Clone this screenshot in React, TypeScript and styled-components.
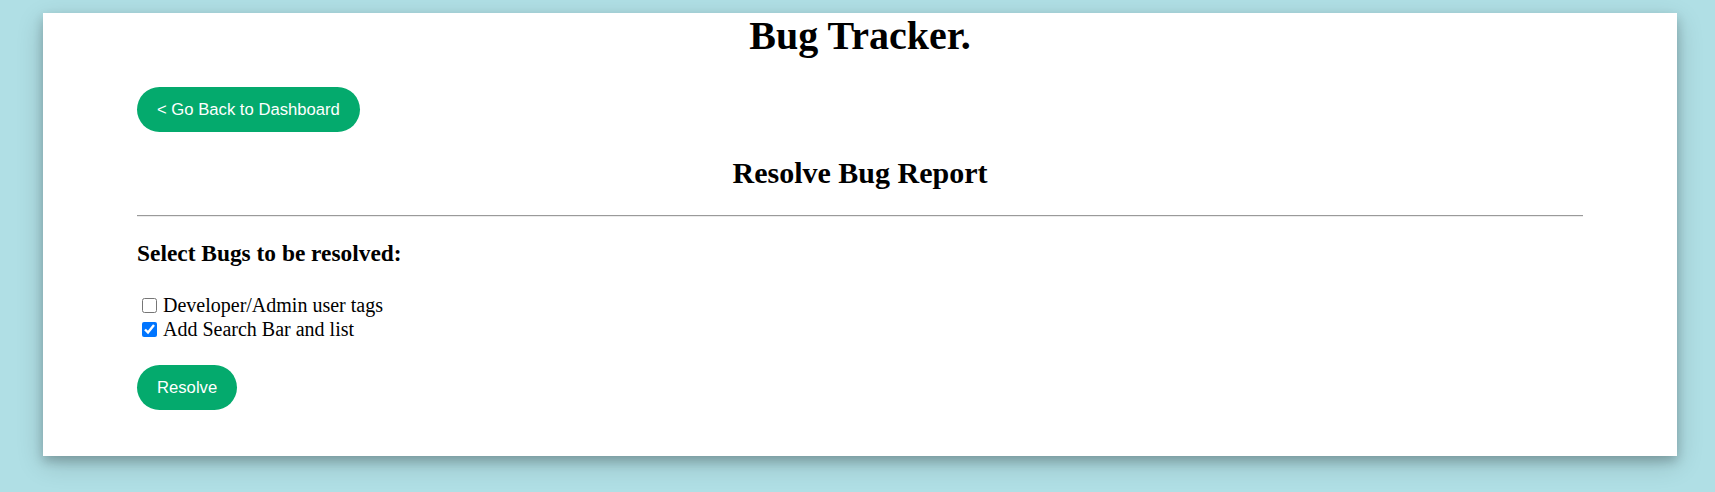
import React from 'react'
import styled, { createGlobalStyle } from 'styled-components'

const GlobalStyle = createGlobalStyle`
  html, body {
    margin: 0;
    padding: 0;
    background: #b0dfe5;
    font-family: 'Liberation Serif', 'Times New Roman', serif;
    color: #000;
  }
`

const Page = styled.div`
  padding: 13px 38px 36px 43px;
`

const Card = styled.main`
  box-sizing: border-box;
  width: 1634px;
  background: #fff;
  padding: 0 94px 46px;
  display: flex;
  flex-direction: column;
  box-shadow: 0 5px 10px 0 rgba(0, 0, 0, 0.2),
    0 7.5px 25px 0 rgba(0, 0, 0, 0.19);
`

const Title = styled.h1`
  margin: 0;
  font-size: 40px;
  line-height: 45px;
  font-weight: bold;
  text-align: center;
`

const PillButton = styled.button<{ $top: number }>`
  align-self: flex-start;
  margin-top: ${(p) => p.$top}px;
  height: 45px;
  padding: 0 20px;
  border: none;
  border-radius: 23px;
  background: #04aa6d;
  color: #fff;
  font-family: 'Liberation Sans', Arial, sans-serif;
  font-size: 16.67px;
  cursor: pointer;
`

const Heading = styled.h2`
  margin: 23.7px 0 0;
  font-size: 30px;
  line-height: 34px;
  font-weight: bold;
  text-align: center;
`

const Divider = styled.hr`
  margin: 25.3px 0 0;
  height: 0;
  border: none;
  border-top: 1px solid #9a9a9a;
  border-bottom: 1px solid #ececec;
`

const SubHeading = styled.h3`
  margin: 23.1px 0 0;
  font-size: 23.4px;
  line-height: 27px;
  font-weight: bold;
`

const BugList = styled.div`
  margin-top: 26px;
  display: flex;
  flex-direction: column;
`

const BugRow = styled.label`
  display: flex;
  align-items: center;
  height: 24px;
  font-size: 20px;
  line-height: 24px;
`

const Check = styled.input`
  width: 15px;
  height: 15px;
  margin: 0 6px 0 5px;
`

const bugs = [
  { id: 1, title: 'Developer/Admin user tags', done: false },
  { id: 2, title: 'Add Search Bar and list', done: true },
]

export default function App() {
  const [checked, setChecked] = React.useState<Record<number, boolean>>(
    Object.fromEntries(bugs.map((b) => [b.id, b.done]))
  )

  return (
    <Page>
      <GlobalStyle />
      <Card>
        <Title>Bug Tracker.</Title>
        <PillButton $top={29}>&lt; Go Back to Dashboard</PillButton>
        <Heading>Resolve Bug Report</Heading>
        <Divider />
        <SubHeading>Select Bugs to be resolved:</SubHeading>
        <BugList>
          {bugs.map((bug) => (
            <BugRow key={bug.id}>
              <Check
                type="checkbox"
                checked={checked[bug.id]}
                onChange={() =>
                  setChecked({ ...checked, [bug.id]: !checked[bug.id] })
                }
              />
              {bug.title}
            </BugRow>
          ))}
        </BugList>
        <PillButton $top={24}>Resolve</PillButton>
      </Card>
    </Page>
  )
}
